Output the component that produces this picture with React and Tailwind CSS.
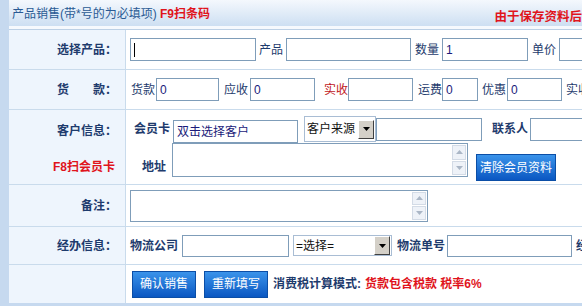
const font = { fontFamily: '"Liberation Sans", "Noto Sans CJK SC", sans-serif' };

const Input = ({ w, h = 'h-[23px]', value = '', caret = false }) => (
  <div className={`${w} ${h} shrink-0 border border-[#7f9db9] bg-white flex items-center pl-[3px] text-[12px] text-[#1b1b7a]`}>
    {caret && <span className="inline-block w-px h-[14px] bg-black" />}
    {value}
  </div>
);

const Arrow = ({ up }) => (
  <div className="flex-1 border border-[#d3dbe6] bg-[#eef2f8] flex items-center justify-center">
    <svg width="7" height="4" viewBox="0 0 7 4">
      {up ? <path d="M0 4 L3.5 0 L7 4 Z" fill="#aab6c6" /> : <path d="M0 0 L3.5 4 L7 0 Z" fill="#aab6c6" />}
    </svg>
  </div>
);

const TextArea = ({ w, h }) => (
  <div className={`${w} ${h} shrink-0 border border-[#7f9db9] bg-white flex justify-end`}>
    <div className="w-[16px] flex flex-col gap-px p-px">
      <Arrow up />
      <Arrow />
    </div>
  </div>
);

const Select = ({ w, h, text }) => (
  <div className={`${w} ${h} shrink-0 border border-[#a9bdd4] bg-white flex items-center text-[12px] text-[#111]`}>
    <span className="flex-1 pl-[2px] whitespace-nowrap overflow-hidden">{text}</span>
    <div className="w-[16px] h-[19px] mr-px bg-[#d4d0c8] border border-t-white border-l-white border-r-[#404040] border-b-[#404040] flex items-center justify-center">
      <svg width="7" height="4" viewBox="0 0 7 4">
        <path d="M0 0 L3.5 4 L7 0 Z" fill="#000" />
      </svg>
    </div>
  </div>
);

const Btn = ({ children, w }) => (
  <div className={`${w} h-[27px] shrink-0 flex items-center justify-center text-white text-[12px] bg-gradient-to-b from-[#3a93ea] to-[#0a57c2] border border-[#0b4ea6]`}>
    {children}
  </div>
);

const Label = ({ children }) => (
  <div className="w-[117px] shrink-0 bg-[#eef5fd] border-r border-[#c9dbec] flex items-center justify-end pr-[8px] text-[12px] font-bold text-[#1e3b6d]">
    {children}
  </div>
);

const T = ({ children, className = '' }) => (
  <span className={`text-[12px] whitespace-nowrap text-[#1e3b6d] ${className}`}>{children}</span>
);

export default function App() {
  return (
    <div className="w-[582px] h-[306px] overflow-hidden flex bg-white" style={font}>
      <div className="w-[9px] shrink-0 bg-[#c6d9ef]" />
      <div className="flex-1 flex flex-col min-w-0">
        {/* header */}
        <div className="h-[26px] bg-gradient-to-b from-[#f4f8fd] to-[#cddff2] flex justify-between pl-[3px]">
          <div className="pt-[5px] text-[12px] whitespace-nowrap text-[#2a5a94]">
            产品销售(带*号的为必填项) <span className="font-bold text-[#e0141c]">F9扫条码</span>
          </div>
          <div className="self-end text-[12.5px] font-bold text-[#e0141c] whitespace-nowrap -mb-[1px]">
            由于保存资料后
          </div>
        </div>
        <div className="h-[3px] bg-[#f6f9fd]" />

        <div className="border-t border-[#bcd0e5] flex flex-col flex-1">
          {/* row1 */}
          <div className="h-[40px] flex border-b border-[#c9dbec]">
            <Label>选择产品：</Label>
            <div className="flex items-center pl-[4px] gap-[3px]">
              <Input w="w-[126px]" caret />
              <T>产品</T>
              <Input w="w-[125px]" />
              <T className="ml-[1px]">数量</T>
              <Input w="w-[86px]" value="1" />
              <T className="ml-[1px]">单价</T>
              <Input w="w-[60px]" />
            </div>
          </div>

          {/* row2 */}
          <div className="h-[40px] flex border-b border-[#c9dbec]">
            <Label>货　　款：</Label>
            <div className="flex items-center pl-[5px]">
              <T>货款</T>
              <div className="ml-[1px]"><Input w="w-[63px]" value="0" /></div>
              <T className="ml-[5px]">应收</T>
              <div className="ml-[2px]"><Input w="w-[65px]" value="0" /></div>
              <T className="ml-[9px] text-[#c0161c]">实收</T>
              <Input w="w-[65px]" />
              <T className="ml-[5px]">运费</T>
              <Input w="w-[36px]" value="0" />
              <T className="ml-[4px]">优惠</T>
              <div className="ml-[1px]"><Input w="w-[55px]" value="0" /></div>
              <T className="ml-[4px]">实收</T>
            </div>
          </div>

          {/* row3 */}
          <div className="h-[75px] flex border-b border-[#c9dbec]">
            <div className="w-[117px] shrink-0 bg-[#eef5fd] border-r border-[#c9dbec] flex flex-col items-end pr-[8px] pt-[12px] gap-[18px] text-[12px] font-bold">
              <span className="text-[#1e3b6d]">客户信息：</span>
              <span className="text-[#e0141c] pr-[2px]">F8扫会员卡</span>
            </div>
            <div className="flex flex-col pt-[6px]">
              <div className="flex items-end h-[27px] pl-[8px]">
                <T className="font-bold mb-[5px]">会员卡</T>
                <div className="ml-[3px]">
                  <Input w="w-[125px]" value="双击选择客户" />
                </div>
                <div className="ml-[6px] self-start">
                  <Select w="w-[72px]" h="h-[26px]" text="客户来源" />
                </div>
                <div className="mb-[2px]">
                  <Input w="w-[106px]" />
                </div>
                <T className="font-bold ml-[10px] mb-[5px]">联系人</T>
                <div className="ml-[2px] mb-[2px]">
                  <Input w="w-[60px]" />
                </div>
              </div>
              <div className="flex pl-[16px]">
                <T className="font-bold mt-[15px]">地址</T>
                <div className="ml-[6px]">
                  <TextArea w="w-[296px]" h="h-[34px]" />
                </div>
                <div className="ml-[8px] mt-[11px]">
                  <Btn w="w-[80px]">清除会员资料</Btn>
                </div>
              </div>
            </div>
          </div>

          {/* row4 */}
          <div className="h-[42px] flex border-b border-[#c9dbec]">
            <Label>备注：</Label>
            <div className="flex items-center pl-[4px]">
              <TextArea w="w-[298px]" h="h-[32px]" />
            </div>
          </div>

          {/* row5 */}
          <div className="h-[38px] flex border-b border-[#c9dbec]">
            <Label>经办信息：</Label>
            <div className="flex items-center pl-[4px]">
              <T className="font-bold">物流公司</T>
              <div className="ml-[4px]"><Input w="w-[107px]" h="h-[22px]" /></div>
              <div className="ml-[4px]"><Select w="w-[99px]" h="h-[21px]" text="=选择=" /></div>
              <T className="font-bold ml-[5px]">物流单号</T>
              <div className="ml-[2px]"><Input w="w-[125px]" h="h-[22px]" /></div>
              <T className="font-bold ml-[4px]">经办人</T>
            </div>
          </div>

          {/* row6 */}
          <div className="h-[38px] flex">
            <div className="w-[117px] shrink-0 bg-[#eef5fd] border-r border-[#c9dbec]" />
            <div className="flex items-center pl-[6px]">
              <Btn w="w-[64px]">确认销售</Btn>
              <div className="ml-[8px]"><Btn w="w-[64px]">重新填写</Btn></div>
              <T className="font-bold ml-[5px]">消费税计算模式:</T>
              <T className="font-bold ml-[4px] text-[#e0141c]">货款包含税款 税率6%</T>
            </div>
          </div>
        </div>
        <div className="h-[3px] bg-[#c6d9ef]" />
      </div>
    </div>
  );
}
